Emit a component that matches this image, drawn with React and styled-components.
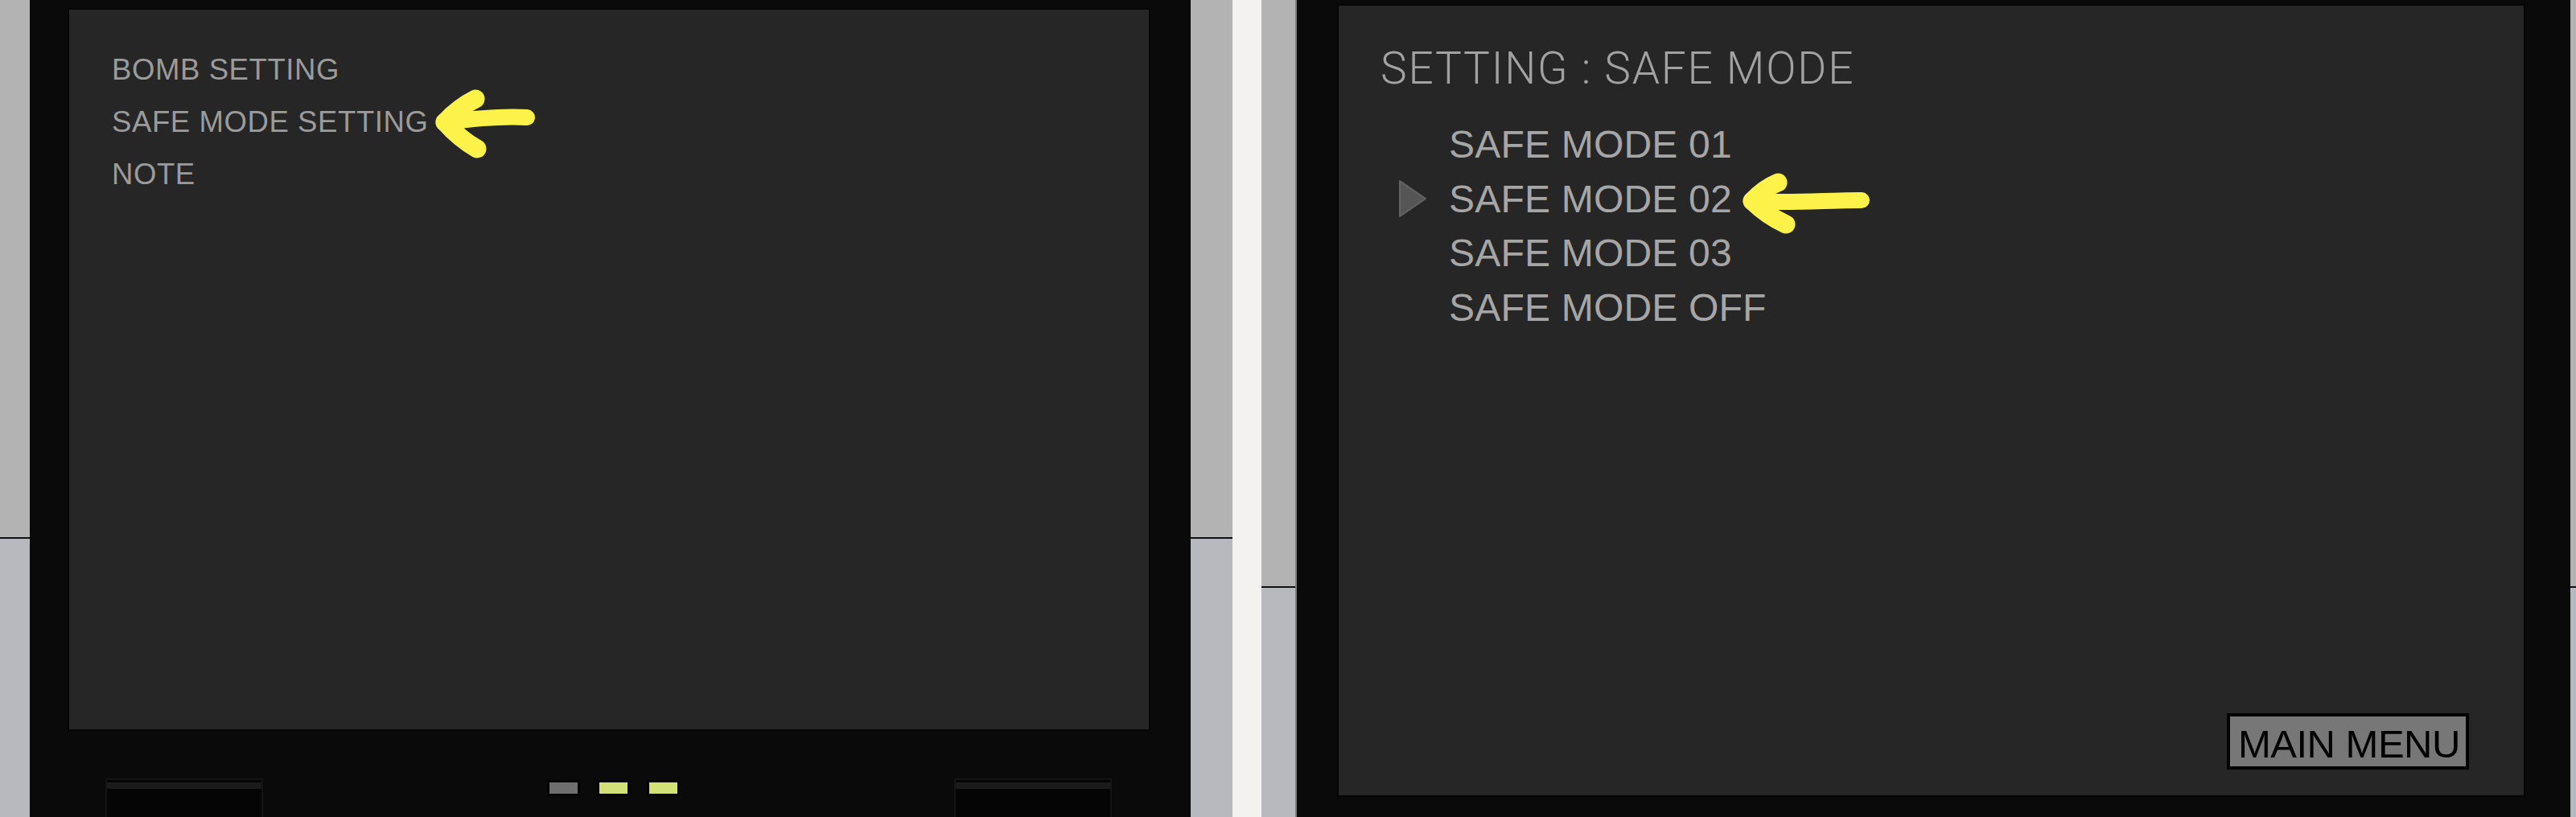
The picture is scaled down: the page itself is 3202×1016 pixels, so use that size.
import React from 'react';
import styled, { createGlobalStyle } from 'styled-components';

const GlobalStyle = createGlobalStyle`
  html, body { margin: 0; padding: 0; background: #b3b3b3; overflow: hidden; }
  * { box-sizing: border-box; }
`;

const Page = styled.div`
  display: flex;
  width: 3202px;
  height: 1016px;
  overflow: hidden;
`;

const Strip = styled.div`
  flex: 0 0 ${(p) => p.$w}px;
  display: flex;
  flex-direction: column;
  background: #b7b9be;
`;

const StripTop = styled.div`
  height: ${(p) => p.$line}px;
  background: #b3b3b3;
  border-bottom: 2px solid #111;
`;

const Divider = styled.div`
  flex: 0 0 36px;
  background: #f3f2f1;
`;

const Device = styled.div`
  flex: 0 0 ${(p) => p.$w}px;
  height: 1016px;
  display: flex;
  flex-direction: column;
  background: #0a0a0a;
  padding: ${(p) => p.$pad};
  border-left: ${(p) => (p.$edge ? '2px solid #7c7c7c' : 'none')};
`;

const Screen = styled.div`
  position: relative;
  flex: 0 0 ${(p) => p.$h}px;
  display: flex;
  flex-direction: column;
  background: #262626;
  border: 2px solid #050505;
  padding: ${(p) => p.$pad};
`;

const MainList = styled.ul`
  list-style: none;
  margin: 0;
  padding: 0;
`;

const MainItem = styled.li`
  font-family: 'Liberation Sans', Arial, sans-serif;
  font-size: 36.5px;
  line-height: 65px;
  letter-spacing: 0.6px;
  color: #9b9b9b;
  white-space: nowrap;
`;

const Title = styled.h1`
  margin: 0;
  font-family: Roboto, 'Liberation Sans', sans-serif;
  font-weight: 300;
  font-size: 55px;
  line-height: 55px;
  letter-spacing: 1.8px;
  color: #a2a2a2;
  white-space: nowrap;
`;

const ModeList = styled.ul`
  list-style: none;
  margin: 33px 0 0 22px;
  padding: 0;
`;

const ModeItem = styled.li`
  display: flex;
  align-items: center;
  height: 67.5px;
  font-family: 'Liberation Sans', Arial, sans-serif;
  font-size: 48px;
  letter-spacing: 0.2px;
  color: #a6a6a6;
  white-space: nowrap;
`;

const Marker = styled.span`
  flex: 0 0 63px;
  display: flex;
  align-items: center;
`;

const MenuButton = styled.button`
  margin-top: auto;
  align-self: flex-end;
  margin-right: 68px;
  margin-bottom: 32px;
  width: 301px;
  height: 70px;
  padding: 6px 0 0 10px;
  display: flex;
  align-items: center;
  background: #777777;
  border: 4px solid #000;
  font-family: 'Liberation Sans', Arial, sans-serif;
  font-size: 49px;
  letter-spacing: -0.5px;
  color: #000;
  cursor: pointer;
`;

const Annotation = styled.svg`
  position: absolute;
  left: ${(p) => p.$x}px;
  top: ${(p) => p.$y}px;
  overflow: visible;
`;

const BottomRow = styled.div`
  flex: 1;
  display: flex;
  align-items: flex-start;
`;

const Foot = styled.div`
  flex: 0 0 196px;
  height: 48px;
  margin-top: 59px;
  margin-left: ${(p) => p.$ml}px;
  background: #050505;
  border: 2px solid #141414;
  border-bottom: none;
  padding-top: 3px;
`;

const FootBand = styled.div`
  height: 8px;
  background: #1b1b1b;
`;

const LedGroup = styled.div`
  display: flex;
  gap: 25px;
  margin-top: 63px;
  margin-left: ${(p) => p.$ml}px;
`;

const Led = styled.span`
  width: 37px;
  height: 16px;
  background: ${(p) => (p.$on ? '#d2e078' : '#6f6f6f')};
  border: 1px solid #000;
  box-shadow: 0 0 0 2px #040404;
`;

const Arrow = ({ x, y, tip, up, down, shaft }) => (
  <Annotation $x={x} $y={y} width="170" height="100" viewBox="0 0 170 100">
    <g fill="none" stroke="#fcf24a" strokeLinecap="round" strokeLinejoin="round">
      <path d={`M${tip[0]},${tip[1]} ${shaft}`} strokeWidth="20" />
      <path d={`M${tip[0]},${tip[1]} Q${(tip[0] + up[0]) / 2 - 2},${(tip[1] + up[1]) / 2 - 4} ${up[0]},${up[1]}`} strokeWidth="23" />
      <path d={`M${tip[0]},${tip[1]} Q${(tip[0] + down[0]) / 2 - 2},${(tip[1] + down[1]) / 2 + 4} ${down[0]},${down[1]}`} strokeWidth="23" />
    </g>
  </Annotation>
);

const Triangle = () => (
  <svg width="36" height="48" viewBox="0 0 36 48">
    <polygon points="2,2 34,24 2,46" fill="#555555" stroke="#636363" strokeWidth="2" strokeLinejoin="round" />
  </svg>
);

const modes = ['SAFE MODE 01', 'SAFE MODE 02', 'SAFE MODE 03', 'SAFE MODE OFF'];

export default function App() {
  return (
    <>
      <GlobalStyle />
      <Page>
        <Strip $w={37}><StripTop $line={670} /></Strip>

        <Device $w={1443} $pad="10px 50px 0 47px">
          <Screen $h={899} $pad="42px 0 0 53px">
            <MainList>
              <MainItem>BOMB SETTING</MainItem>
              <MainItem>SAFE MODE SETTING</MainItem>
              <MainItem>NOTE</MainItem>
            </MainList>
            <Arrow
              x={448}
              y={93}
              tip={[19, 47]}
              up={[57, 18]}
              down={[59, 80]}
              shaft="C50,43 90,39 121,41"
            />
          </Screen>
          <BottomRow>
            <Foot $ml={47}><FootBand /></Foot>
            <LedGroup $ml={355}>
              <Led />
              <Led $on />
              <Led $on />
            </LedGroup>
            <Foot $ml={343}><FootBand /></Foot>
          </BottomRow>
        </Device>

        <Strip $w={52}><StripTop $line={670} /></Strip>
        <Divider />
        <Strip $w={42}><StripTop $line={731} /></Strip>

        <Device $w={1585} $pad="5px 56px 25px 50px" $edge>
          <Screen $h={986} $pad="51px 0 0 52px">
            <Title>SETTING : SAFE MODE</Title>
            <ModeList>
              {modes.map((m, i) => (
                <ModeItem key={m}>
                  <Marker>{i === 1 && <Triangle />}</Marker>
                  {m}
                </ModeItem>
              ))}
            </ModeList>
            <Arrow
              x={498}
              y={198}
              tip={[16, 45]}
              up={[48, 22]}
              down={[58, 74]}
              shaft="C60,48 110,44 152,44"
            />
            <MenuButton>MAIN MENU</MenuButton>
          </Screen>
        </Device>

        <Strip $w={7}><StripTop $line={731} /></Strip>
      </Page>
    </>
  );
}
